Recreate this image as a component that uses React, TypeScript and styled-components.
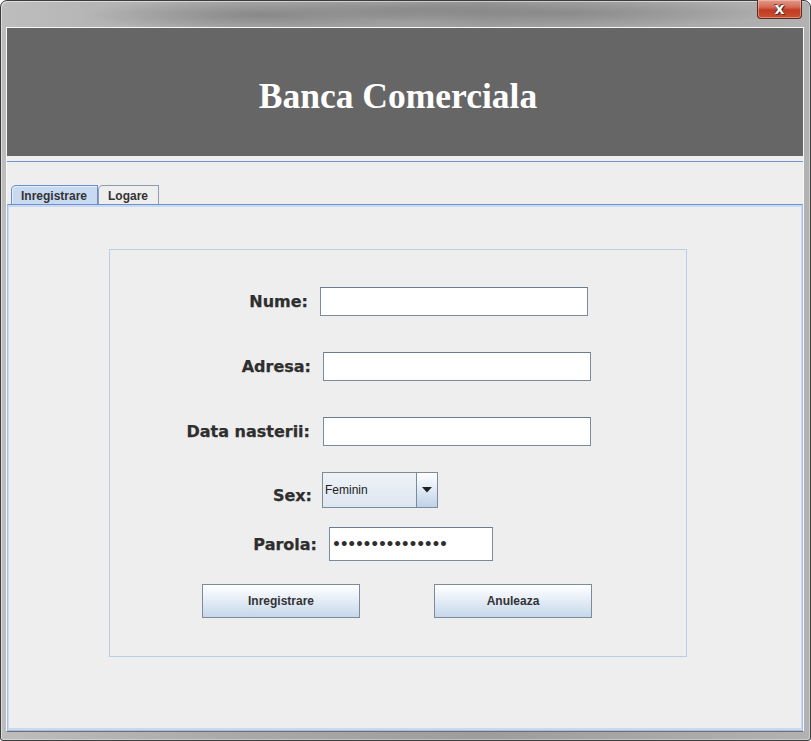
import React from "react";
import styled, { createGlobalStyle } from "styled-components";

const GlobalStyle = createGlobalStyle`
  html, body {
    margin: 0;
    padding: 0;
    background: #ffffff;
  }
  * {
    box-sizing: border-box;
  }
`;

const Window = styled.div`
  width: 811px;
  height: 741px;
  display: flex;
  flex-direction: column;
  padding: 0 6px 8px 5px;
  border: 1px solid #3c3c3c;
  border-radius: 7px 7px 3px 3px;
  background:
    radial-gradient(ellipse 180px 16px at 260px 14px, rgba(110, 110, 110, 0.55), transparent),
    radial-gradient(ellipse 220px 14px at 560px 12px, rgba(115, 115, 115, 0.5), transparent),
    radial-gradient(ellipse 140px 12px at 420px 8px, rgba(125, 125, 125, 0.45), transparent),
    linear-gradient(90deg, #bdbdbd 0%, #a9a9a9 30%, #9d9d9d 60%, #b2b2b2 100%);
  box-shadow: inset 1px 1px 0 rgba(255, 255, 255, 0.5), inset -1px -1px 0 rgba(255, 255, 255, 0.35);
`;

const TitleBar = styled.div`
  height: 26px;
  display: flex;
  justify-content: flex-end;
  align-items: flex-start;
  padding-right: 2px;
`;

const CloseButton = styled.div`
  width: 45px;
  height: 19px;
  margin-top: -1px;
  display: flex;
  align-items: center;
  justify-content: center;
  border: 1px solid #5a2a24;
  border-top: none;
  border-radius: 0 0 4px 4px;
  background: linear-gradient(180deg, #e29a8c 0%, #d46a55 40%, #c23a22 55%, #c9502f 100%);
  box-shadow: inset 0 0 0 1px rgba(255, 210, 200, 0.45);
  color: #ffffff;
  font-family: "DejaVu Sans", sans-serif;
  font-weight: bold;
  font-size: 13px;
  line-height: 1;
  text-shadow: 0 0 1px #333, 1px 1px 0 #5a2a24, -1px -1px 0 #7a3a30;
`;

const Client = styled.div`
  flex: 1;
  display: flex;
  flex-direction: column;
  border: 1px solid #f6f6f6;
  border-bottom-color: #6f6f6f;
  background: #eeeeee;
`;

const Header = styled.div`
  height: 128px;
  display: flex;
  align-items: center;
  justify-content: center;
  padding: 8px 14px 0 0;
  background: #666666;
`;

const HeaderTitle = styled.h1`
  margin: 0;
  color: #ffffff;
  font-family: "Liberation Serif", "Times New Roman", serif;
  font-weight: bold;
  font-size: 35.5px;
  letter-spacing: 0;
`;

const TabArea = styled.div`
  flex: 1;
  display: flex;
  flex-direction: column;
  margin-top: 5px;
  border-top: 1px solid #7592cf;
  padding-top: 23px;
`;

const TabStrip = styled.div`
  height: 19px;
  display: flex;
  padding-left: 4px;
`;

const Tab = styled.div<{ $active?: boolean }>`
  height: 19px;
  display: flex;
  align-items: center;
  padding: 1px 10px 0 9px;
  border: 1px solid ${(p) => (p.$active ? "#6d8ecb" : "#8c9cb2")};
  border-bottom: none;
  border-radius: 5px 0 0 0;
  background: ${(p) => (p.$active ? "#c8daf1" : "#eeeeee")};
  box-shadow: ${(p) => (p.$active ? "inset 1px 1px 0 #e3edf9" : "none")};
  font-family: "Liberation Sans", Arial, sans-serif;
  font-weight: bold;
  font-size: 12px;
  color: #333333;
`;

const TabPanel = styled.div`
  flex: 1;
  display: flex;
  flex-direction: column;
  border: 1px solid #a8c0e3;
  border-top-color: #6f90cd;
  box-shadow: inset 0 2px 0 #c8daf1, inset 1px 0 0 #c8daf1, inset -1px 0 0 #c8daf1, inset 0 -2px 0 #c8daf1;
  padding: 44px 0 0 101px;
`;

const FormBox = styled.div`
  width: 578px;
  height: 408px;
  display: flex;
  flex-direction: column;
  border: 1px solid #b9cfe6;
`;

const Row = styled.div<{ $top: number }>`
  display: flex;
  align-items: center;
  margin-top: ${(p) => p.$top}px;
`;

const Label = styled.label<{ $end: number; $gap: number; $drop?: number }>`
  width: ${(p) => p.$end - 110}px;
  margin-right: ${(p) => p.$gap}px;
  padding-top: ${(p) => p.$drop ?? 0}px;
  text-align: right;
  white-space: nowrap;
  font-family: "DejaVu Sans", Verdana, sans-serif;
  font-weight: bold;
  font-size: 16px;
  color: #2e2e2e;
  -webkit-text-stroke: 0.25px #2e2e2e;
`;

const TextField = styled.input<{ $w: number; $h: number }>`
  width: ${(p) => p.$w}px;
  height: ${(p) => p.$h}px;
  margin: 0;
  padding: 0 3px;
  border: 1px solid #7a8b9c;
  border-top-color: #6a7c90;
  background: #ffffff;
  outline: none;
  font-family: "Liberation Sans", Arial, sans-serif;
  font-size: 12px;
  color: #333333;
`;

const PasswordField = styled(TextField)`
  padding-left: 2px;
  font-family: "DejaVu Sans", sans-serif;
  font-weight: bold;
  font-size: 14px;
  letter-spacing: -1.3px;
  color: #2e2e2e;
`;

const Combo = styled.div`
  width: 116px;
  height: 36px;
  display: flex;
  border: 1px solid #7a8b9c;
  background: linear-gradient(180deg, #eef2f7 0%, #dde6f0 100%);
`;

const ComboValue = styled.div`
  flex: 1;
  padding: 10px 0 0 2px;
  border-right: 1px solid #7a8b9c;
  font-family: "Liberation Sans", Arial, sans-serif;
  font-size: 12px;
  color: #222222;
`;

const ComboArrow = styled.div`
  width: 20px;
  display: flex;
  align-items: center;
  justify-content: center;
  background: linear-gradient(180deg, #ffffff 0%, #e3ecf6 45%, #bfd2e7 100%);
`;

const ButtonRow = styled.div`
  display: flex;
  margin: 23px 0 0 92px;
  gap: 74px;
`;

const Button = styled.button`
  width: 158px;
  height: 34px;
  margin: 0;
  padding: 0;
  border: 1px solid #7a8b9c;
  background: linear-gradient(180deg, #ffffff 0%, #e9f0f8 40%, #c6d7ea 100%);
  font-family: "Liberation Sans", Arial, sans-serif;
  font-weight: bold;
  font-size: 12px;
  color: #333333;
  cursor: pointer;
`;

export default function App() {
  return (
    <>
      <GlobalStyle />
      <Window>
        <TitleBar>
          <CloseButton>X</CloseButton>
        </TitleBar>
        <Client>
          <Header>
            <HeaderTitle>Banca Comerciala</HeaderTitle>
          </Header>
          <TabArea>
            <TabStrip>
              <Tab $active>Inregistrare</Tab>
              <Tab>Logare</Tab>
            </TabStrip>
            <TabPanel>
              <FormBox>
                <Row $top={37}>
                  <Label $end={308} $gap={12}>Nume:</Label>
                  <TextField $w={268} $h={29} />
                </Row>
                <Row $top={36}>
                  <Label $end={311} $gap={12}>Adresa:</Label>
                  <TextField $w={268} $h={29} />
                </Row>
                <Row $top={36}>
                  <Label $end={310} $gap={13}>Data nasterii:</Label>
                  <TextField $w={268} $h={29} />
                </Row>
                <Row $top={26}>
                  <Label $end={312} $gap={10} $drop={10}>Sex:</Label>
                  <Combo>
                    <ComboValue>Feminin</ComboValue>
                    <ComboArrow>
                      <svg width="10" height="6" viewBox="0 0 10 6">
                        <path d="M0 0 L10 0 L5 5.5 Z" fill="#222222" />
                      </svg>
                    </ComboArrow>
                  </Combo>
                </Row>
                <Row $top={19}>
                  <Label $end={317} $gap={12}>Parola:</Label>
                  <PasswordField type="password" defaultValue="123456789012345" $w={164} $h={34} />
                </Row>
                <ButtonRow>
                  <Button>Inregistrare</Button>
                  <Button>Anuleaza</Button>
                </ButtonRow>
              </FormBox>
            </TabPanel>
          </TabArea>
        </Client>
      </Window>
    </>
  );
}
